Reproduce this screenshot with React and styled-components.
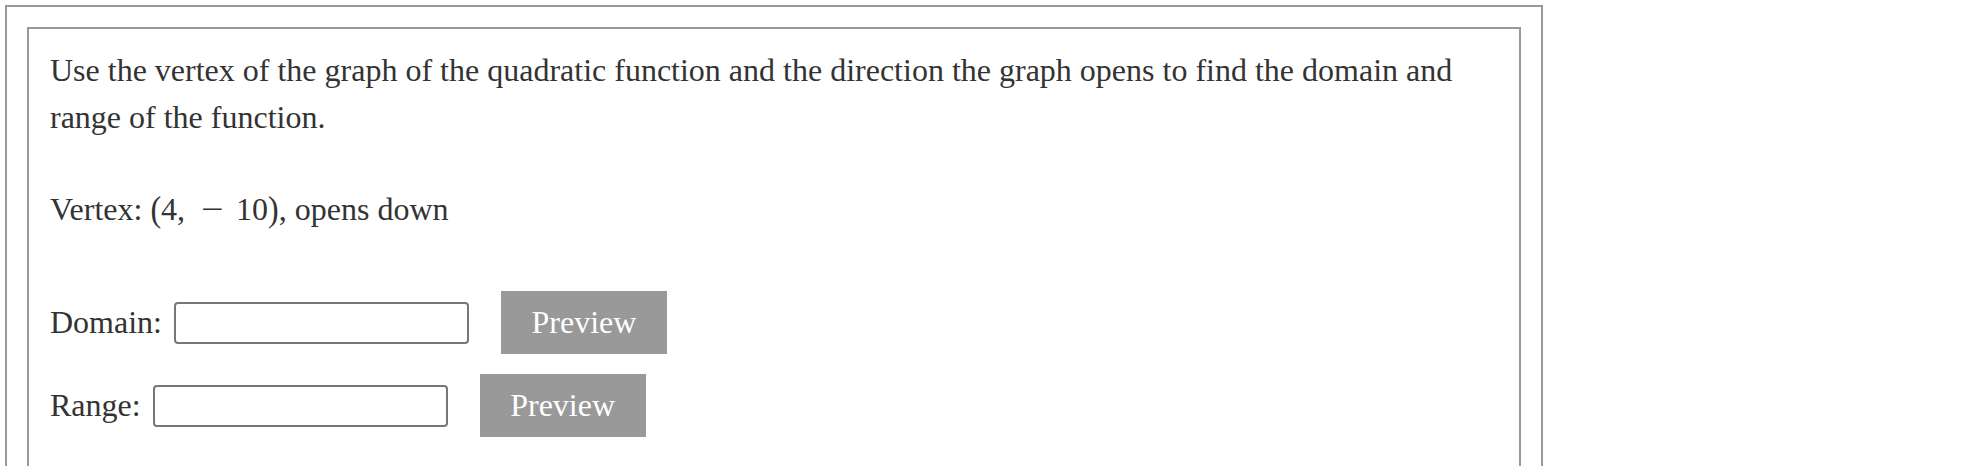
import React from "react";
import styled, { createGlobalStyle } from "styled-components";

const Global = createGlobalStyle`
  html, body { margin: 0; padding: 0; background: #fff; }
  body { font-family: "Liberation Serif", "Times New Roman", serif; color: #333; }
`;

const Outer = styled.div`
  margin: 5px 0 0 5px;
  width: 1538px;
  height: 520px;
  box-sizing: border-box;
  border: 2px solid #999;
  padding: 20px 20px 0 20px;
`;

const Inner = styled.div`
  border: 2px solid #999;
  height: 520px;
  box-sizing: border-box;
  padding: 18px 20px 0 21px;
`;

const Para = styled.p`
  margin: 0;
  font-size: 32px;
  line-height: 47px;
  margin-bottom: ${(p) => p.$mb || 0}px;
`;

const MathText = styled.span`
  font-family: "Liberation Serif", "Times New Roman", serif;
`;

const Paren = styled.span`
  display: inline-block;
  transform: scaleY(1.12);
`;

const Minus = styled.span`
  display: inline-block;
  transform: scaleX(1.25);
  margin: 0 ${(p) => p.$m}px;
`;

const Sp = styled.span`
  display: inline-block;
  width: ${(p) => p.$w}px;
`;

const Row = styled.div`
  display: flex;
  align-items: center;
  font-size: 32px;
  height: 63px;
  margin-top: ${(p) => p.$mt || 0}px;
`;

const Label = styled.span`
  margin-right: 12px;
`;

const Input = styled.input`
  width: 295px;
  height: 42px;
  box-sizing: border-box;
  border: 2px solid #777;
  border-radius: 4px;
  margin: 0 32px 0 0;
  padding: 0;
  font-size: 20px;
  background: #fff;
`;

const Button = styled.button`
  width: 166px;
  height: 63px;
  background: #999;
  color: #fff;
  border: none;
  padding: 0;
  font-family: "Liberation Serif", "Times New Roman", serif;
  font-size: 32px;
`;

export default function App() {
  return (
    <>
      <Global />
      <Outer>
        <Inner>
          <Para $mb={45}>
            Use the vertex of the graph of the quadratic function and the direction the graph opens to find the domain and range of the function.
          </Para>
          <Para $mb={0}>
            Vertex:{" "}
            <MathText>
              <Paren>(</Paren>4,<Sp $w={16} />
              <Minus $m={2}>−</Minus>
              <Sp $w={13} />10<Paren>)</Paren>
            </MathText>
            , opens down
          </Para>
          <Row $mt={58}>
            <Label>Domain:</Label>
            <Input type="text" />
            <Button>Preview</Button>
          </Row>
          <Row $mt={20}>
            <Label>Range:</Label>
            <Input type="text" />
            <Button>Preview</Button>
          </Row>
        </Inner>
      </Outer>
    </>
  );
}
